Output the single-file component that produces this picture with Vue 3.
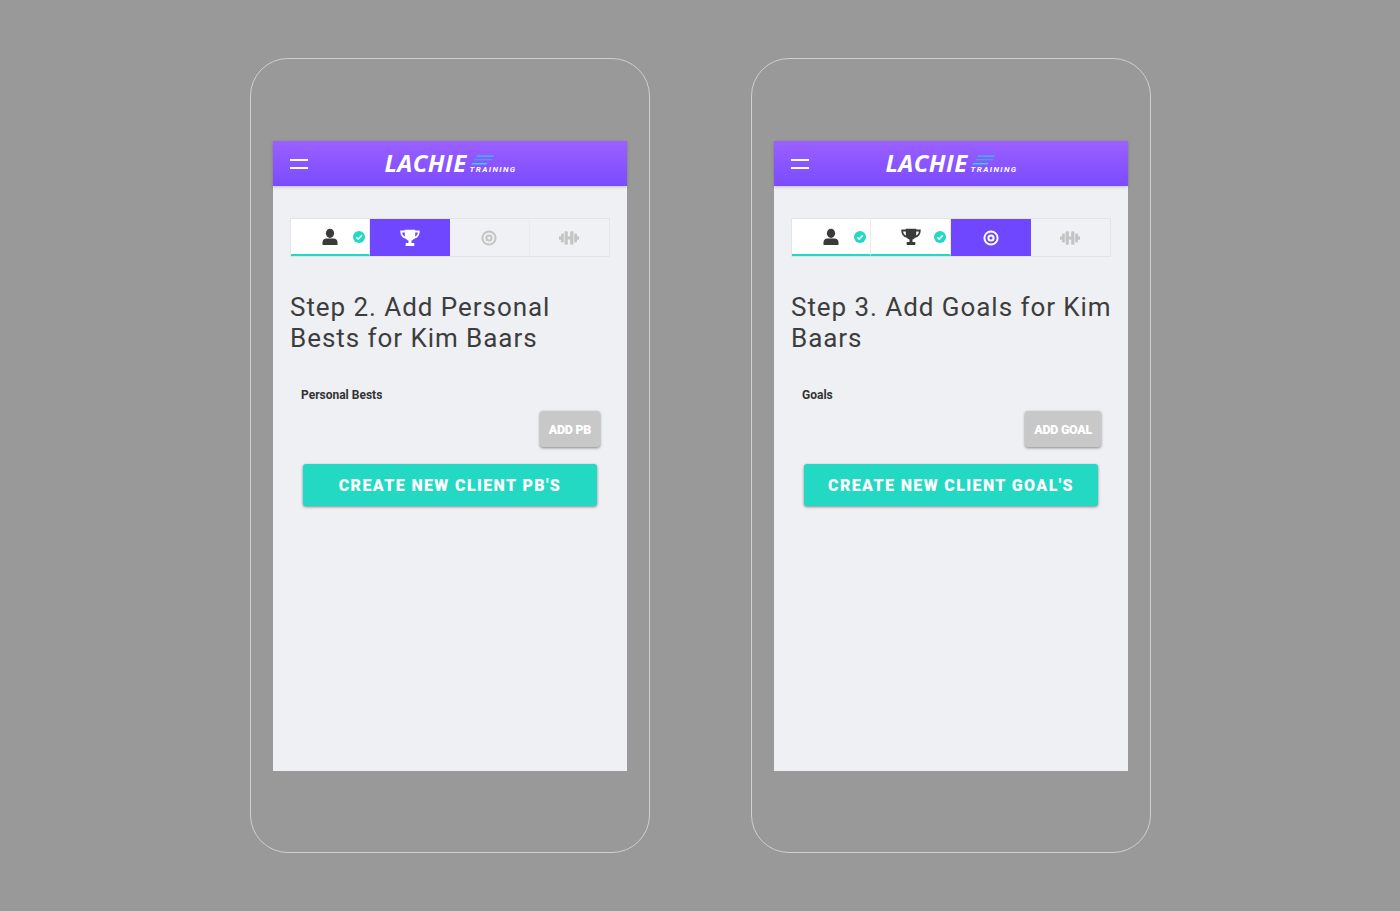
<script setup>
const phones = [
  {
    title: 'Step 2. Add Personal Bests for Kim Baars',
    label: 'Personal Bests',
    add: 'ADD PB',
    submit: "CREATE NEW CLIENT PB'S",
    done: 1,
  },
  {
    title: 'Step 3. Add Goals for Kim Baars',
    label: 'Goals',
    add: 'ADD GOAL',
    submit: "CREATE NEW CLIENT GOAL'S",
    done: 2,
  },
]

const tabs = ['person', 'trophy', 'target', 'dumbbell']

function tabState(phone, i) {
  if (i < phone.done) return 'done'
  if (i === phone.done) return 'active'
  return 'todo'
}
</script>

<template>
  <div class="page">
    <div v-for="phone in phones" :key="phone.title" class="phone">
      <div class="screen">
        <header class="topbar">
          <div class="burger"><span></span><span></span></div>
          <div class="logo">
            <span class="logo-main">LACHIE</span>
            <div class="logo-side">
              <svg class="logo-lines" width="26" height="11" viewBox="0 0 26 11">
                <path d="M7.500 0.500h17l-1.500 1.300H6z" fill="#35c4e6" />
                <path d="M5 4h18l-1.500 1.300H3.500z" fill="#4a9cf2" />
                <path d="M2.500 8h15l-1.500 1.500H1z" fill="#2fd3dc" />
              </svg>
              <span class="logo-sub">TRAINING</span>
            </div>
          </div>
        </header>

        <main class="content">
          <div class="tabs">
            <div v-for="(tab, i) in tabs" :key="tab" class="tab" :class="tabState(phone, i)">
              <svg class="tab-icon" width="20" height="20" viewBox="0 0 20 20">
                <template v-if="tab === 'person'">
                  <ellipse cx="10" cy="6.300" rx="4.100" ry="4.600" fill="currentColor" />
                  <path d="M2.500 18v-2.800c0-2.200 1.800-3.700 3.800-3.700h7.400c2 0 3.800 1.500 3.800 3.700V18z" fill="currentColor" />
                </template>
                <template v-else-if="tab === 'trophy'">
                  <path d="M4.800 1.800h10.400v5.500c0 3-1.800 4.700-3.700 5.300v2.500h2.800v3H5.700v-3h2.800v-2.500C6.600 12 4.800 10.300 4.800 7.300z" fill="currentColor" />
                  <path d="M5 3.500H1.200c0 3.500 1.500 5.800 5 6.300M15 3.500h3.800c0 3.500-1.500 5.800-5 6.300" fill="none" stroke="currentColor" stroke-width="1.800" />
                </template>
                <template v-else-if="tab === 'target'">
                  <circle cx="10" cy="10" r="6.600" fill="none" stroke="currentColor" stroke-width="2" />
                  <circle cx="10" cy="10" r="2.600" fill="none" stroke="currentColor" stroke-width="2" />
                </template>
                <template v-else>
                  <rect x="0" y="8.300" width="2" height="3.400" rx="0.500" fill="currentColor" />
                  <rect x="18" y="8.300" width="2" height="3.400" rx="0.500" fill="currentColor" />
                  <rect x="2" y="5.500" width="2.800" height="9" rx="1" fill="currentColor" />
                  <rect x="15.200" y="5.500" width="2.800" height="9" rx="1" fill="currentColor" />
                  <rect x="5.600" y="3.300" width="3.200" height="13.400" rx="1" fill="currentColor" />
                  <rect x="11.200" y="3.300" width="3.200" height="13.400" rx="1" fill="currentColor" />
                  <rect x="8.500" y="8.500" width="3" height="3" fill="currentColor" />
                </template>
              </svg>
              <svg v-if="tabState(phone, i) === 'done'" class="check" width="12" height="12" viewBox="0 0 12 12">
                <circle cx="6" cy="6" r="6" fill="#24d9c3" />
                <path d="M3.200 6.200l2 2 3.600-3.900" fill="none" stroke="#fff" stroke-width="1.500" />
              </svg>
            </div>
          </div>

          <h1 class="title">{{ phone.title }}</h1>

          <div class="field-label">{{ phone.label }}</div>
          <div class="add-row">
            <button class="add-btn">{{ phone.add }}</button>
          </div>
          <button class="submit">{{ phone.submit }}</button>
        </main>
      </div>
    </div>
  </div>
</template>

<style>
html,
body {
  margin: 0;
  background: #999999;
}
</style>

<style scoped>
.page {
  display: flex;
  gap: 101px;
  width: 1400px;
  height: 911px;
  box-sizing: border-box;
  padding: 58px 0 0 250px;
  background: #999999;
  font-family: Roboto, "Liberation Sans", sans-serif;
  overflow: hidden;
}

.phone {
  width: 400px;
  height: 795px;
  box-sizing: border-box;
  padding: 82px 22px 0;
  border: 1px solid #cfcfcf;
  border-radius: 38px;
}

.screen {
  width: 354px;
  height: 630px;
  background: #eef0f4;
}

.topbar {
  position: relative;
  display: flex;
  align-items: center;
  justify-content: center;
  height: 45px;
  background: linear-gradient(#9b60ff, #7a4bff);
  box-shadow: 0 1px 3px rgba(0, 0, 0, 0.2);
}

.burger {
  position: absolute;
  left: 17px;
  top: 18px;
  display: flex;
  flex-direction: column;
  gap: 6px;
}

.burger span {
  display: block;
  width: 18px;
  height: 2px;
  background: #fff;
}

.logo {
  display: flex;
  align-items: flex-end;
  gap: 3px;
  height: 26px;
  margin: -2px 0 0 1px;
  color: #fff;
}

.logo-main {
  font-family: "Open Sans", sans-serif;
  font-size: 24px;
  line-height: 26px;
  font-weight: 700;
  font-style: italic;
  letter-spacing: 0.4px;
}

.logo-side {
  display: flex;
  flex-direction: column;
  padding-bottom: 1px;
}

.logo-lines {
  margin-bottom: -1px;
}

.logo-sub {
  font-size: 8px;
  line-height: 10px;
  font-weight: 700;
  font-style: italic;
  letter-spacing: 1.400px;
}

.content {
  padding: 32px 17px 0;
}

.tabs {
  display: grid;
  grid-template-columns: 79px 80px 80px 79px;
  width: 320px;
  height: 39px;
  box-sizing: border-box;
  border: 1px solid #e2e4e7;
  background: #f0f1f4;
}

.tab {
  position: relative;
  display: flex;
  align-items: center;
  justify-content: center;
  color: #c4c4c4;
  box-sizing: border-box;
  border-right: 1px solid #e8eaed;
}

.tab:last-child {
  border-right: 0;
}

.tab.todo .tab-icon {
  margin-left: -1px;
}

.tab.done {
  background: #fff;
  color: #3a3a3a;
  border-bottom: 2px solid #24d9c3;
}

.tab.active {
  background: #6f47ff;
  color: #fff;
  border-right: 0;
}

.check {
  position: absolute;
  right: 4px;
  top: 12px;
}

.title {
  margin: 35px -4px 0 0;
  font-size: 26px;
  line-height: 31px;
  font-weight: 400;
  letter-spacing: 0.95px;
  color: #3d3d3d;
}

.field-label {
  margin: 34px 0 0 11px;
  font-size: 12px;
  line-height: 14px;
  font-weight: 700;
  color: #333;
}

.add-row {
  display: flex;
  justify-content: flex-end;
  margin: 9px 10px 0 0;
}

.add-btn {
  height: 36px;
  padding: 0 9px;
  border: 0;
  border-radius: 3px;
  background: #c8c8c8;
  color: #fff;
  font-family: Roboto, sans-serif;
  font-size: 12.500px;
  font-weight: 900;
  letter-spacing: -0.3px;
  box-shadow: 0 1px 3px rgba(0, 0, 0, 0.45);
}

.submit {
  display: block;
  width: 294px;
  height: 42px;
  margin: 17px 0 0 13px;
  padding: 0;
  border: 0;
  border-radius: 3px;
  background: #24d9c3;
  color: #fff;
  font-family: Roboto, sans-serif;
  font-size: 16px;
  font-weight: 900;
  letter-spacing: 1.400px;
  box-shadow: 0 1px 3px rgba(0, 0, 0, 0.45);
}
</style>
